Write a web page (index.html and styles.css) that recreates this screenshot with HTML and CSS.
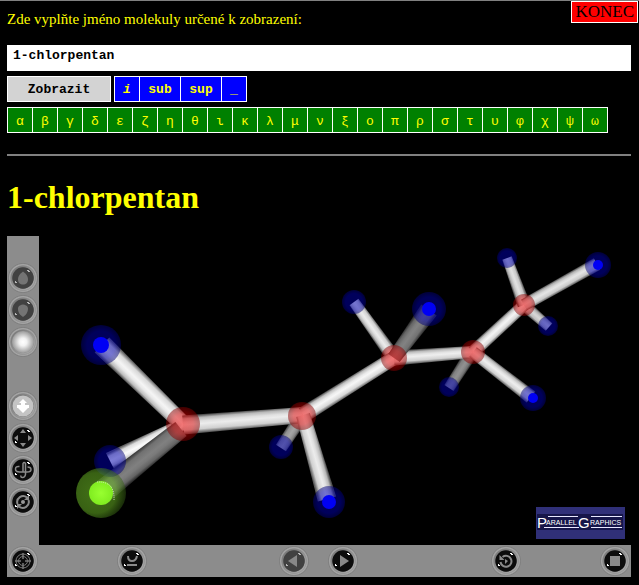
FILE: index.html
```html
<!DOCTYPE html>
<html lang="cs">
<head>
<meta charset="utf-8">
<title>1-chlorpentan</title>
<link rel="stylesheet" href="styles.css">
</head>
<body>
<a class="exit" href="#konec">KONEC</a>
<form class="query">
  <label class="prompt" for="molecule">Zde vyplňte jméno molekuly určené k zobrazení:</label>
  <input class="name" id="molecule" type="text" value="1-chlorpentan" spellcheck="false">
  <div class="row">
    <button class="key submit" type="button">Zobrazit</button>
    <div class="keys markup">
      <button class="key" type="button"><i>i</i></button>
      <button class="key tag" type="button">sub</button>
      <button class="key tag" type="button">sup</button>
      <button class="key" type="button">_</button>
    </div>
  </div>
  <div class="keys greek" id="greek"></div>
</form>
<hr class="rule">
<h1 class="title">1-chlorpentan</h1>

<svg class="defs" aria-hidden="true">
  <defs>
    <radialGradient id="rim" cx=".5" cy=".5" r=".5">
      <stop offset=".66" stop-color="#6a6a6a"/><stop offset=".78" stop-color="#8a8a8a"/><stop offset=".86" stop-color="#a8a8a8"/><stop offset=".94" stop-color="#808080"/><stop offset="1" stop-color="#8c8c8c"/>
    </radialGradient>
    <linearGradient id="bevel" x1="0" y1="0" x2="1" y2="1">
      <stop offset="0" stop-color="#747474"/><stop offset="1" stop-color="#acacac"/>
    </linearGradient>
    <radialGradient id="lamp"><stop offset="0" stop-color="#fff"/><stop offset=".35" stop-color="#f2f2f2"/><stop offset="1" stop-color="#9a9a9a"/></radialGradient>
    <radialGradient id="blue"><stop offset="0" stop-color="#0000b4" stop-opacity=".5"/><stop offset=".7" stop-color="#0000b0" stop-opacity=".52"/><stop offset="1" stop-color="#000070" stop-opacity=".5"/></radialGradient>
    <radialGradient id="red"><stop offset="0" stop-color="#f00000" stop-opacity=".52"/><stop offset=".6" stop-color="#d80000" stop-opacity=".5"/><stop offset="1" stop-color="#800000" stop-opacity=".5"/></radialGradient>
    <radialGradient id="green" cx=".4" cy=".5" r=".62"><stop offset="0" stop-color="#6fbd28" stop-opacity=".6"/><stop offset=".65" stop-color="#62a822" stop-opacity=".58"/><stop offset="1" stop-color="#2c5010" stop-opacity=".45"/></radialGradient>
    <radialGradient id="lime"><stop offset="0" stop-color="#98ff30"/><stop offset="1" stop-color="#80ec20"/></radialGradient>
    <symbol id="ring" viewBox="0 0 32 32">
      <circle cx="16" cy="16" r="15.500" fill="url(#rim)"/>
      <circle cx="16" cy="16" r="11.500" fill="none" stroke="url(#bevel)" stroke-width="1.500"/>
    </symbol>
    <symbol id="knob" viewBox="0 0 32 32">
      <use href="#ring"/><circle cx="16" cy="16" r="10.700" fill="#0c0c0c"/>
      <path d="M20 8h2v1h1v1h-2V9h-1zM8 19h1v1h1v1H8z" fill="#fff"/>
    </symbol>
    <symbol id="dim" viewBox="0 0 32 32">
      <use href="#ring"/><circle cx="16" cy="16" r="10.700" fill="#414141"/>
      <path d="M20 8h2v1h1v1h-2V9h-1zM8 19h1v1h1v1H8z" fill="#b8b8b8"/>
    </symbol>
    <symbol id="lit" viewBox="0 0 32 32"><use href="#ring"/><circle cx="16" cy="16" r="11" fill="url(#lamp)"/></symbol>
  </defs>
</svg>

<section class="viewer">
  <div class="upper">
    <div class="side">
      <button class="tool" type="button" aria-label="Walk"><svg viewBox="0 0 32 32"><use href="#dim"/><path d="M16 9.500c3 2 5 5 5 7.500 0 4-2 5.500-5 5.500s-5-1.500-5-5.500c0-2.500 2-5.500 5-7.500z" fill="#747474"/></svg></button>
      <button class="tool" type="button" aria-label="Fly"><svg viewBox="0 0 32 32"><use href="#dim"/><path d="M13 11.500q3-2 6 0c3 1 2.500 6-.5 9.500l-2.500 2-2.500-2c-3-3.500-3.500-8.500-.5-9.500z" fill="#747474"/></svg></button>
      <button class="tool" type="button" aria-label="Study"><svg viewBox="0 0 32 32"><use href="#lit"/></svg></button>
      <button class="tool second" type="button" aria-label="Plan"><svg viewBox="0 0 32 32"><use href="#ring"/><circle cx="16" cy="16" r="10.500" fill="#c4c4c4"/><path d="M16 9l4 4h-2v2h4v3h-1l-5 5-5-5h-1v-3h4v-2h-2z" fill="#fff"/></svg></button>
      <button class="tool" type="button" aria-label="Pan"><svg viewBox="0 0 32 32"><use href="#knob"/><path d="M16 7l3 4h-6zM16 25l3-4h-6zM7 16l4-3v6zM25 16l-4-3v6z" fill="#8a8a8a"/></svg></button>
      <button class="tool" type="button" aria-label="Turn"><svg viewBox="0 0 32 32"><use href="#knob"/><path d="M16 18v-8.500q1-2 2.500 0v11q-.5 3-3 3-2 0-1.500-2M12.500 12.500q-4-.5-4 2.500t4 3h7.500q4 0 4-2.500t-3.500-2.500" fill="none" stroke="#8a8a8a" stroke-width="1.500"/></svg></button>
      <button class="tool" type="button" aria-label="Roll"><svg viewBox="0 0 32 32"><use href="#knob"/><path d="M10.500 18a6 6 0 0 1 9.500-6.500M21.500 14a6 6 0 0 1-9.500 6.500" fill="none" stroke="#8a8a8a" stroke-width="2"/><path d="M22 9v5h-5zM10 23v-5h5z" fill="#8a8a8a"/><circle cx="16" cy="16" r="2" fill="#999"/></svg></button>
    </div>
    <svg class="scene" id="scene" viewBox="39 236 592 309" role="img" aria-label="1-chlorpentan">
      <g id="bonds"></g>
      <g id="atoms"></g>
      <g class="mark">
        <rect x="536" y="507" width="89" height="32" fill="#303078"/>
        <path d="M537 514h86v16h-86z" fill="#16164a"/>
        <path d="M548 516.500h30M591 516.500h31M544 527.500h35M591 527.500h31" stroke="#e8e8ff"/>
        <text class="initial" x="537" y="528">P</text><text class="letters" x="546" y="525">ARALLEL</text>
        <text class="initial" x="578" y="528">G</text><text class="letters" x="590" y="525">RAPHICS</text>
      </g>
    </svg>
  </div>
  <div class="bottom">
    <button class="tool" type="button" aria-label="Go to"><svg viewBox="0 0 32 32"><use href="#knob"/><g fill="none" stroke="#777"><circle cx="16" cy="16" r="7"/><circle cx="16" cy="16" r="4.500"/><path d="M16 8v6M16 18v6M8 16h6M18 16h6" stroke-width="1.500"/></g></svg></button>
    <button class="tool align" type="button" aria-label="Align"><svg viewBox="0 0 32 32"><use href="#knob"/><path d="M12 11q0 5 4 5t5-5M11 20h10" fill="none" stroke="#8a8a8a" stroke-width="2"/></svg></button>
    <button class="tool prev" type="button" aria-label="Previous view"><svg viewBox="0 0 32 32"><use href="#dim"/><path d="M10 16l9-6v12z" fill="#888"/></svg></button>
    <button class="tool next" type="button" aria-label="Next view"><svg viewBox="0 0 32 32"><use href="#knob"/><path d="M22 16l-9-6v12z" fill="#888"/></svg></button>
    <button class="tool restore" type="button" aria-label="Restore"><svg viewBox="0 0 32 32"><use href="#knob"/><path d="M12.500 12a5.500 5.500 0 1 1-2 5" fill="none" stroke="#8a8a8a" stroke-width="2"/><path d="M9.500 10v5h5zM15 14l3 2-3 3z" fill="#8a8a8a"/></svg></button>
    <button class="tool fit" type="button" aria-label="Fit"><svg viewBox="0 0 32 32"><use href="#knob"/><path d="M11 11h10v10H11z" fill="#8a8a8a"/></svg></button>
  </div>
</section>
<script src="scene.js"></script>
</body>
</html>
```
FILE: styles.css
```css
* { box-sizing: border-box; }
body {
  margin: 0;
  padding: 9px 8px 8px 7px;
  border-top: 1px solid #808080;
  background: #000;
  color: #ff0;
  font: 16px/18px "Liberation Serif", "Times New Roman", serif;
}
.exit {
  position: absolute;
  top: 1px;
  right: 1px;
  padding: 1px 3px;
  border: 1px solid #fff;
  background: #f00;
  color: #000;
  font-size: 17px;
  text-decoration: none;
}
.query { display: flex; flex-direction: column; }
.prompt { margin-bottom: 17px; font-size: 15px; }
.name {
  width: 100%;
  height: 26px;
  margin-bottom: 5px;
  padding: 0 6px 5px;
  border: 0;
  background: #fff;
  color: #000;
  font: bold 13px/18px "Liberation Mono", "Courier New", monospace;
}
.row { display: flex; gap: 3px; margin-bottom: 5px; }
.keys { display: flex; flex-wrap: wrap; }
.key {
  min-width: 26px;
  height: 26px;
  margin-right: -1px;
  padding: 2px 8px 0;
  border: 1px solid #fff;
  background: #00f;
  color: #ff0;
  font: bold 13px/18px "Liberation Mono", "Courier New", monospace;
}
.tag { min-width: 42px; }
.submit { min-width: 104px; margin-right: 0; background: #d3d3d3; color: #000; }
.greek .key { padding: 3px 0 0; background: #008000; font-weight: normal; }
.rule { height: 2px; margin: 21px 0 22px; border: 0; background: #808080; }
.title { margin: 0 0 20px; font-size: 32px; line-height: 38px; }
.defs { position: absolute; width: 0; height: 0; }
.upper { display: flex; }
.side {
  display: flex;
  flex: none;
  flex-direction: column;
  width: 32px;
  padding-top: 26px;
  background: #8c8c8c;
}
.tool { width: 32px; height: 32px; padding: 0; border: 0; background: none; }
.tool svg { display: block; width: 32px; height: 32px; }
.second { margin-top: 32px; }
.scene { display: block; flex: 1; min-width: 0; }
.bottom {
  display: grid;
  grid-template-columns: 32px 77fr 32px 130fr 32px 17fr 32px 131fr 32px 77fr 32px;
  background: #8c8c8c;
}
.align { grid-column: 3; }
.prev { grid-column: 5; }
.next { grid-column: 7; }
.restore { grid-column: 9; }
.fit { grid-column: 11; }
.mark { fill: #fff; font-family: "Liberation Sans", Arial, sans-serif; }
.initial { font-size: 15px; }
.letters { font-size: 7px; }
```
FILE: scene.js
```js
const keys = document.getElementById("greek");
for (const letter of "αβγδεζηθικλμνξοπρστυφχψω") {
  const key = document.createElement("button");
  key.type = "button";
  key.className = "key";
  key.textContent = letter;
  keys.append(key);
}

const NS = "http://www.w3.org/2000/svg";
function add(parent, name, attrs) {
  const node = document.createElementNS(NS, name);
  for (const k in attrs) node.setAttribute(k, attrs[k]);
  parent.append(node);
  return node;
}

// Bonds, far to near: x1, y1, width1, x2, y2, width2, brightness
const bonds = [
  [302, 416, 14, 281, 448, 12, 165],
  [472, 352, 13, 449, 388, 11, 145],
  [524, 305, 12, 549, 327, 10, 215],
  [183, 424, 12, 110, 461, 18, 250],
  [183, 424, 17, 102, 345, 21, 245],
  [183, 425, 19, 303, 415, 16, 236],
  [394, 358, 14, 354, 302, 11, 236],
  [303, 415, 16, 394, 358, 14, 246],
  [394, 358, 15, 473, 352, 12, 238],
  [303, 415, 14, 327, 499, 19, 236],
  [473, 352, 13, 524, 305, 12, 244],
  [524, 305, 13, 507, 258, 10, 226],
  [524, 305, 12, 597, 264, 13, 228],
  [473, 352, 12, 531, 397, 14, 238],
  [394, 358, 14, 429, 310, 19, 130],
  [181, 429, 18, 101, 493, 24, 128]
];
// Atoms: x, y, radius, fill, core radius
const atoms = [
  [101, 345, 20, "blue", 8], [110, 461, 16, "blue", 0],
  [354, 302, 12, "blue", 0], [429, 309, 17, "blue", 7],
  [281, 447, 12, "blue", 0], [329, 502, 16, "blue", 7],
  [449, 387, 10, "blue", 0], [533, 398, 13, "blue", 5],
  [507, 258, 10, "blue", 0], [598, 265, 13, "blue", 5],
  [548, 326, 10, "blue", 0], [183, 424, 17, "red", 0],
  [302, 416, 14, "red", 0], [394, 358, 13, "red", 0],
  [473, 352, 12, "red", 0], [524, 305, 11, "red", 0],
  [101, 493, 25, "green", 12]
];

const bondLayer = document.getElementById("bonds");
bonds.forEach(([x1, y1, w1, x2, y2, w2, tone], i) => {
  const len = Math.hypot(x2 - x1, y2 - y1);
  const nx = -(y2 - y1) / len / 2, ny = (x2 - x1) / len / 2;
  const w = (w1 + w2) / 2;
  const grad = add(bondLayer, "linearGradient", {
    id: "bond" + i, gradientUnits: "userSpaceOnUse",
    x1: x1 - nx * w, y1: y1 - ny * w, x2: x1 + nx * w, y2: y1 + ny * w
  });
  [[0, 0.35], [0.15, 0.78], [0.35, 0.95], [0.5, 1], [0.8, 0.88], [1, 0.4]].forEach(([offset, k]) => {
    const v = Math.round(tone * k);
    add(grad, "stop", { offset, "stop-color": `rgb(${v},${v},${v})` });
  });
  add(bondLayer, "polygon", {
    points: [[x1 - nx * w1, y1 - ny * w1], [x2 - nx * w2, y2 - ny * w2],
      [x2 + nx * w2, y2 + ny * w2], [x1 + nx * w1, y1 + ny * w1]].join(" "),
    fill: `url(#bond${i})`
  });
});

const atomLayer = document.getElementById("atoms");
for (const [cx, cy, r, kind, core] of atoms) {
  add(atomLayer, "circle", { cx, cy, r, fill: `url(#${kind})` });
  if (core) add(atomLayer, "circle", { cx, cy, r: core, fill: kind === "green" ? "url(#lime)" : "#0000f4" });
}
add(atomLayer, "path", {
  d: "M97 482Q115 481 114 500", fill: "none", stroke: "#d8e8c8", "stroke-dasharray": "1 1"
});
```
